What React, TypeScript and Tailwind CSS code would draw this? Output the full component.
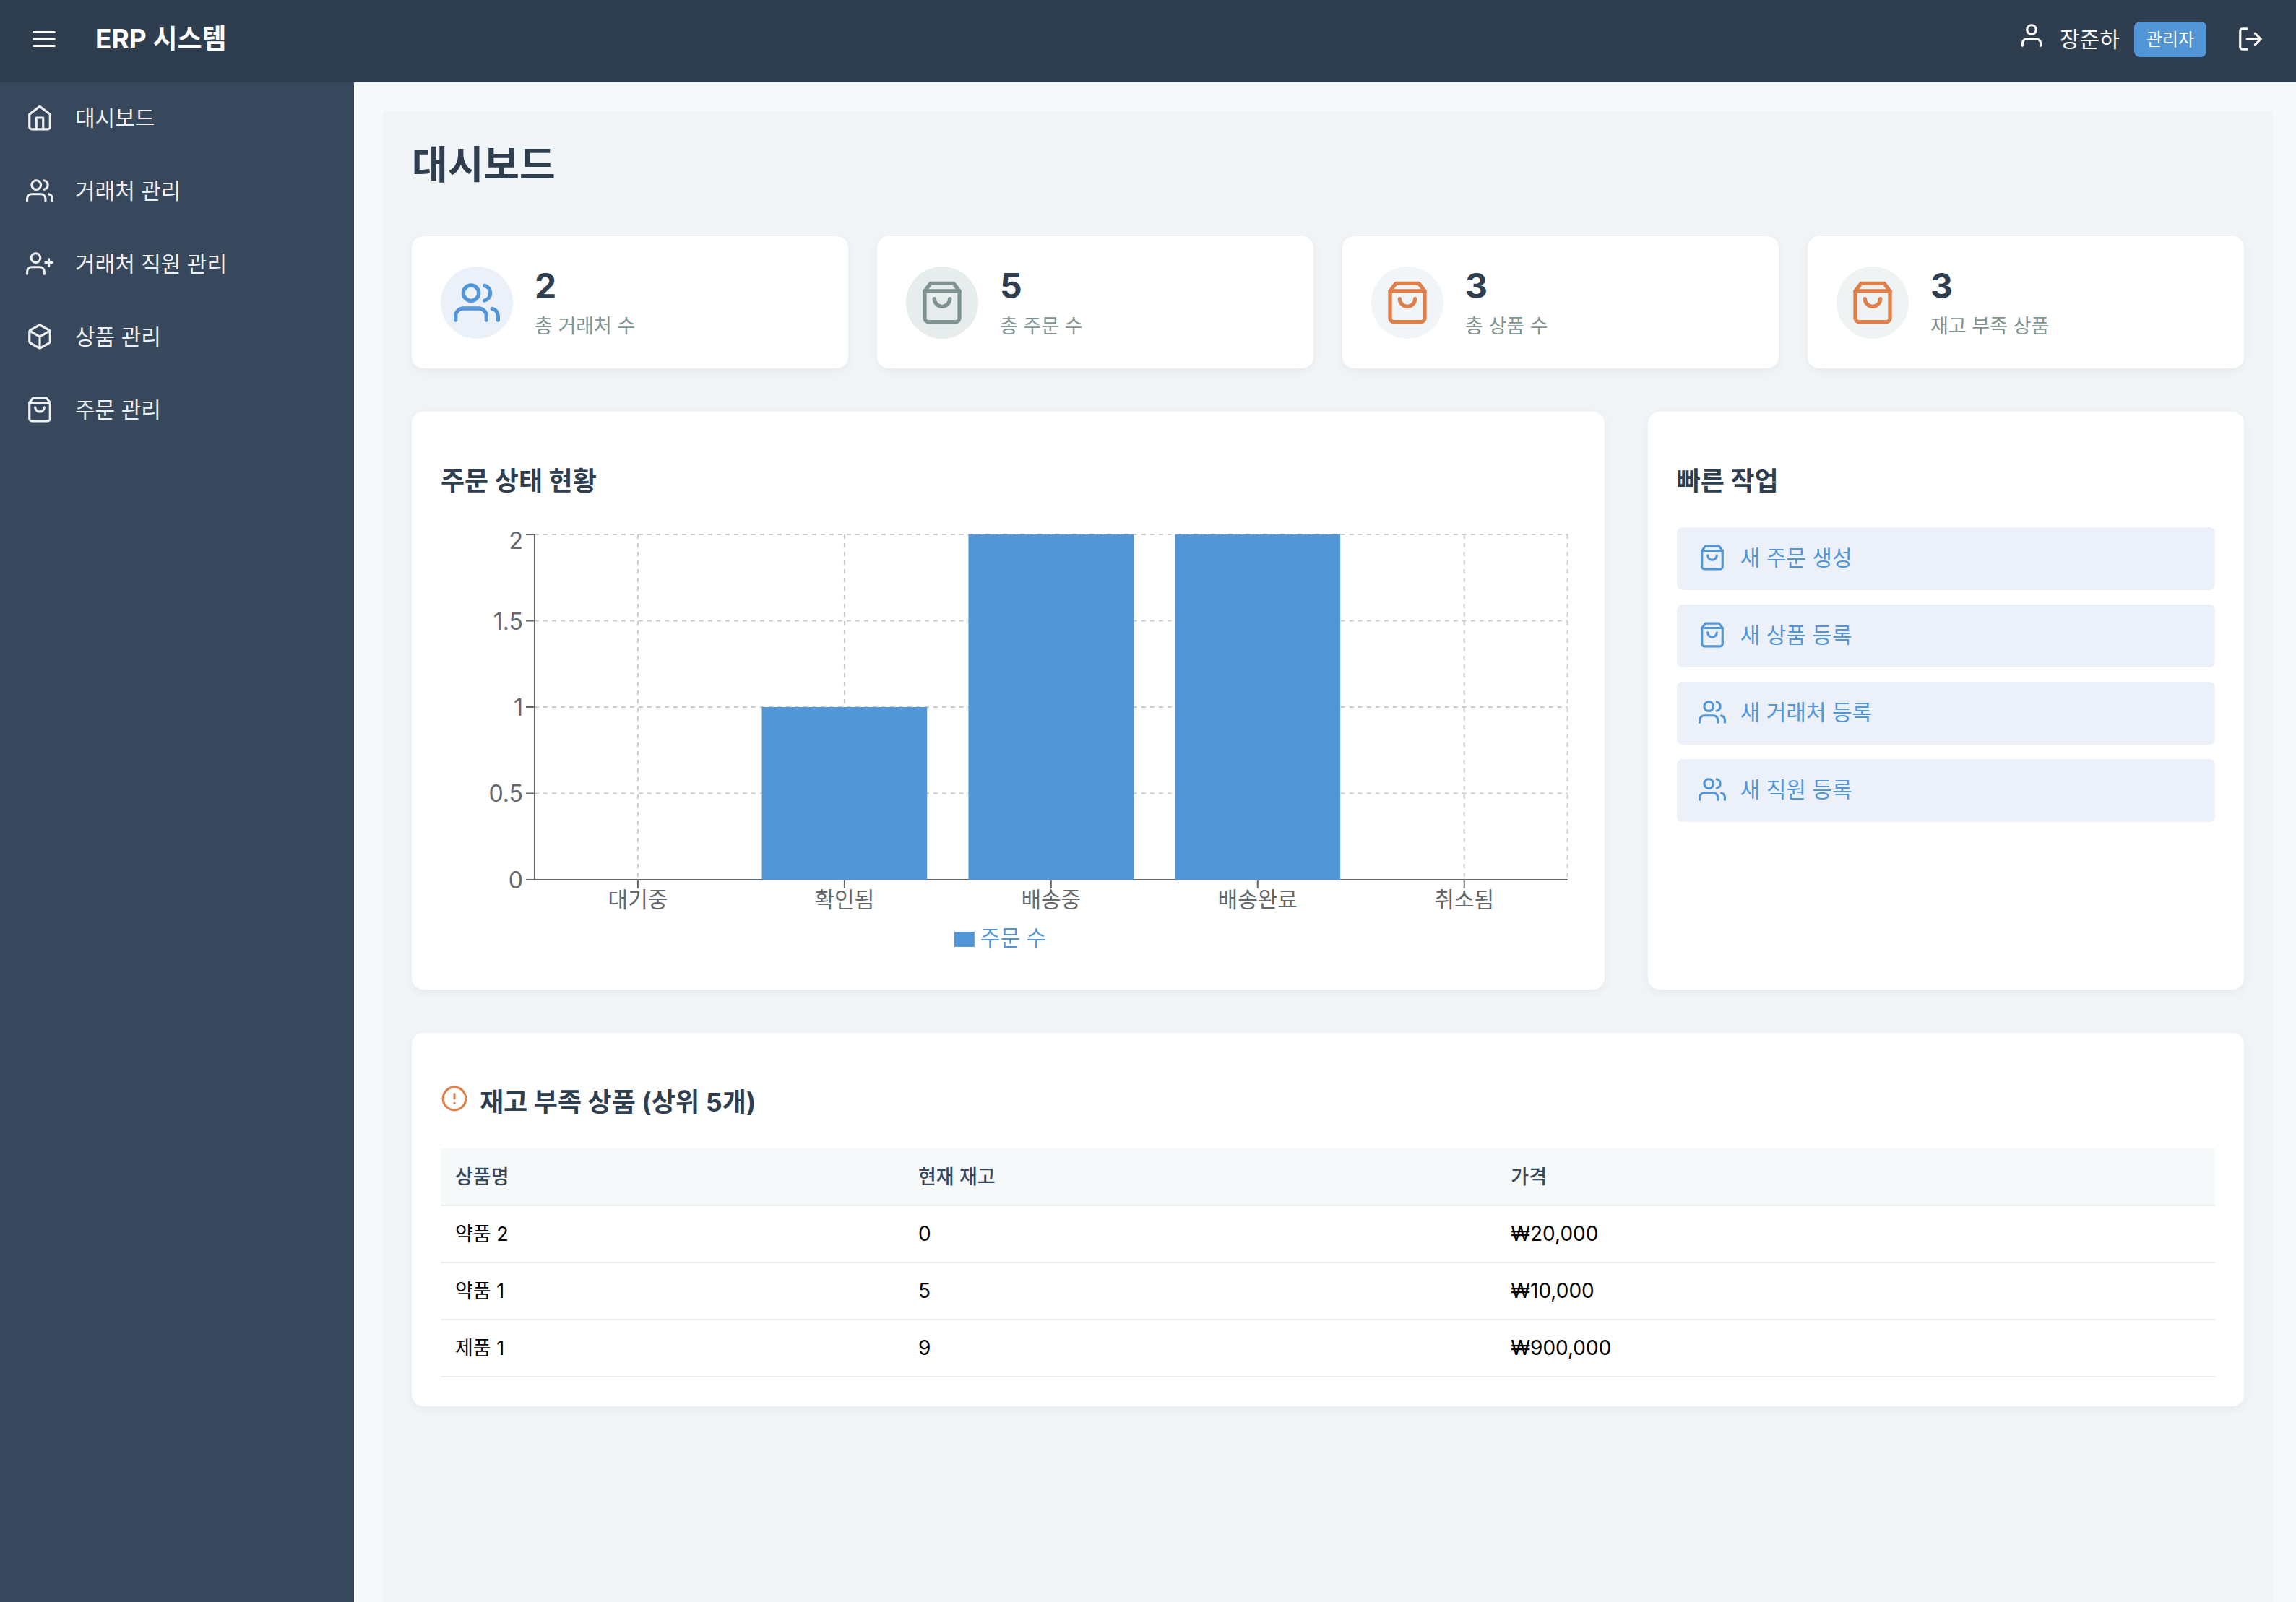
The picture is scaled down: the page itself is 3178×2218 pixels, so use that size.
import type { IconType } from "react-icons";
import {
  FiAlertCircle,
  FiBox,
  FiHome,
  FiLogOut,
  FiMenu,
  FiShoppingBag,
  FiUser,
  FiUserPlus,
  FiUsers,
} from "react-icons/fi";

interface LinkItem {
  label: string;
  icon: IconType;
}

interface Stat {
  label: string;
  value: number;
  icon: IconType;
  tone: string;
}

const navItems: LinkItem[] = [
  { label: "대시보드", icon: FiHome },
  { label: "거래처 관리", icon: FiUsers },
  { label: "거래처 직원 관리", icon: FiUserPlus },
  { label: "상품 관리", icon: FiBox },
  { label: "주문 관리", icon: FiShoppingBag },
];

const stats: Stat[] = [
  { label: "총 거래처 수", value: 2, icon: FiUsers, tone: "bg-[#ecf1f9] text-[#5296d7]" },
  { label: "총 주문 수", value: 5, icon: FiShoppingBag, tone: "bg-[#e7edec] text-[#7f9490]" },
  { label: "총 상품 수", value: 3, icon: FiShoppingBag, tone: "bg-[#f1f5f8] text-[#de804b]" },
  { label: "재고 부족 상품", value: 3, icon: FiShoppingBag, tone: "bg-[#eff3f4] text-[#de804b]" },
];

const quickActions: LinkItem[] = [
  { label: "새 주문 생성", icon: FiShoppingBag },
  { label: "새 상품 등록", icon: FiShoppingBag },
  { label: "새 거래처 등록", icon: FiUsers },
  { label: "새 직원 등록", icon: FiUsers },
];

const orderStatus = [
  { name: "대기중", count: 0 },
  { name: "확인됨", count: 1 },
  { name: "배송중", count: 2 },
  { name: "배송완료", count: 2 },
  { name: "취소됨", count: 0 },
];

const lowStock = [
  { name: "약품 2", stock: 0, price: 20000 },
  { name: "약품 1", stock: 5, price: 10000 },
  { name: "제품 1", stock: 9, price: 900000 },
];

const card = "rounded-2xl bg-white p-10 shadow-[0_4px_16px_rgba(0,0,0,0.05)]";
const cardTitle = "mt-8 mb-10 text-[36px] leading-[48px] font-bold text-[#2f3e4e]";

function OrderChart() {
  const left = 130;
  const right = 1560;
  const top = 10;
  const bottom = 488;
  const max = 2;
  const band = (right - left) / orderStatus.length;
  const barWidth = band * 0.8;
  const y = (value: number) => bottom - (value / max) * (bottom - top);

  return (
    <svg
      viewBox="0 0 1571 600"
      className="h-[600px] w-full"
      role="img"
      aria-label="주문 상태 현황"
    >
      {/* Grid */}
      <g stroke="#c9cccf" strokeWidth="2" strokeDasharray="6 6">
        {[0.5, 1, 1.5, 2].map((tick) => (
          <line key={tick} x1={left} y1={y(tick)} x2={right} y2={y(tick)} />
        ))}
        {orderStatus.map((item, i) => {
          const x = left + band * (i + 0.5);
          return <line key={item.name} x1={x} y1={top} x2={x} y2={bottom} />;
        })}
        <line x1={right} y1={top} x2={right} y2={bottom} />
      </g>

      {/* Axes */}
      <g stroke="#65686b" strokeWidth="2">
        <line x1={left} y1={top} x2={left} y2={bottom} />
        <line x1={left} y1={bottom} x2={right} y2={bottom} />
        {[0, 0.5, 1, 1.5, 2].map((tick) => (
          <line key={tick} x1={left - 12} y1={y(tick)} x2={left} y2={y(tick)} />
        ))}
        {orderStatus.map((item, i) => {
          const x = left + band * (i + 0.5);
          return <line key={item.name} x1={x} y1={bottom} x2={x} y2={bottom + 12} />;
        })}
      </g>

      <g fill="#65686b" textAnchor="end" className="text-[32px]">
        {[0, 0.5, 1, 1.5].map((tick) => (
          <text key={tick} x={left - 16} y={y(tick) + 12}>
            {tick}
          </text>
        ))}
        {/* The top label is kept inside the drawing area */}
        <text x={left - 16} y={y(2) + 20}>
          2
        </text>
      </g>
      <g fill="#65686b" textAnchor="middle" className="text-[30px]">
        {orderStatus.map((item, i) => (
          <text key={item.name} x={left + band * (i + 0.5)} y={bottom + 38}>
            {item.name}
          </text>
        ))}
      </g>

      {/* Bars */}
      {orderStatus
        .map((item, i) => ({ ...item, x: left + band * i + (band - barWidth) / 2 }))
        .filter((item) => item.count > 0)
        .map((item) => (
          <rect
            key={item.name}
            x={item.x}
            y={y(item.count)}
            width={barWidth}
            height={bottom - y(item.count)}
            fill="#5296d7"
          />
        ))}

      {/* Legend */}
      <rect x="711" y="560" width="28" height="21" fill="#5296d7" />
      <text x="747" y="579" fill="#5296d7" className="text-[30px]">
        주문 수
      </text>
    </svg>
  );
}

function Header() {
  return (
    <header className="flex h-[114px] items-center justify-between bg-[#2f3e4e] pr-[34px] pb-[6px] pl-8 text-white">
      <div className="flex items-center gap-[42px]">
        <button type="button" aria-label="메뉴" className="p-[10px]">
          <FiMenu size={38} />
        </button>
        <h1 className="text-[37px] leading-[48px] font-bold">ERP 시스템</h1>
      </div>
      <div className="flex items-center gap-8">
        <div className="flex items-center gap-5">
          <FiUser size={38} className="self-start" />
          <span className="text-[30px] leading-[48px]">장준하</span>
          <span className="rounded-lg bg-[#5296d7] px-[17px] py-2 text-[24px] leading-[33px]">
            관리자
          </span>
        </div>
        <button type="button" aria-label="로그아웃" className="p-[10px]">
          <FiLogOut size={38} />
        </button>
      </div>
    </header>
  );
}

function Sidebar() {
  return (
    <nav className="w-[490px] shrink-0 bg-[#37475c]">
      {navItems.map(({ label, icon: Icon }) => (
        <a
          key={label}
          href="#"
          className="flex h-[101px] items-center gap-[30px] pb-[3px] pl-9 text-[30px] leading-[48px] text-[#ecf0f2]"
        >
          <Icon size={38} />
          {label}
        </a>
      ))}
    </nav>
  );
}

export default function App() {
  return (
    <div className="flex min-h-screen flex-col bg-[#f5f9fa] font-['Inter','Noto_Sans_CJK_KR',sans-serif]">
      <Header />
      <div className="flex grow">
        <Sidebar />
        <main className="flex min-w-0 grow flex-col pt-10 pr-8 pl-10">
          <div className="grow bg-[#f1f5f8] p-10">
            <h2 className="mb-16 text-[54px] leading-[69px] font-bold text-[#2f3e4e]">대시보드</h2>

            <div className="mb-[60px] grid grid-cols-4 gap-10">
              {stats.map(({ label, value, icon: Icon, tone }) => (
                <div key={label} className={`${card} flex items-center gap-[30px]`}>
                  <div
                    className={`flex size-[100px] shrink-0 items-center justify-center rounded-full ${tone}`}
                  >
                    <Icon size={64} />
                  </div>
                  <div className="flex flex-col gap-2">
                    <p className="text-[48px] leading-[58px] font-bold text-[#2f3e4e]">{value}</p>
                    <p className="text-[27px] leading-[37px] text-[#7f9490]">{label}</p>
                  </div>
                </div>
              ))}
            </div>

            <div className="mb-[60px] grid grid-cols-[2fr_1fr] gap-[60px]">
              <section className={card}>
                <h3 className={cardTitle}>주문 상태 현황</h3>
                <OrderChart />
              </section>

              <section className={card}>
                <h3 className={cardTitle}>빠른 작업</h3>
                <div className="flex flex-col gap-5">
                  {quickActions.map(({ label, icon: Icon }) => (
                    <a
                      key={label}
                      href="#"
                      className="flex h-[87px] items-center gap-5 rounded-lg bg-[#ecf1f9] px-[30px] pb-[3px] text-[30px] leading-[48px] text-[#5296d7]"
                    >
                      <Icon size={38} />
                      {label}
                    </a>
                  ))}
                </div>
              </section>
            </div>

            <section className={card}>
              <h3 className={`${cardTitle} flex gap-4`}>
                <FiAlertCircle size={38} className="text-[#de804b]" />
                재고 부족 상품 (상위 5개)
              </h3>
              <table className="w-full table-fixed text-left text-[27px] leading-[37px]">
                <thead className="bg-[#f5f9fa] text-[#37475c]">
                  <tr className="h-[79px] border-b-2 border-[#e9eeee]">
                    <th className="w-[26.1%] px-5 font-medium">상품명</th>
                    <th className="w-[33.4%] px-5 font-medium">현재 재고</th>
                    <th className="px-5 font-medium">가격</th>
                  </tr>
                </thead>
                <tbody className="text-black">
                  {lowStock.map((item) => (
                    <tr key={item.name} className="h-[79px] border-b-2 border-[#e9eeee]">
                      <td className="px-5">{item.name}</td>
                      <td className="px-5 text-[28px]">{item.stock}</td>
                      <td className="px-5 text-[28px]">₩{item.price.toLocaleString("en-US")}</td>
                    </tr>
                  ))}
                </tbody>
              </table>
            </section>
          </div>
        </main>
      </div>
    </div>
  );
}
